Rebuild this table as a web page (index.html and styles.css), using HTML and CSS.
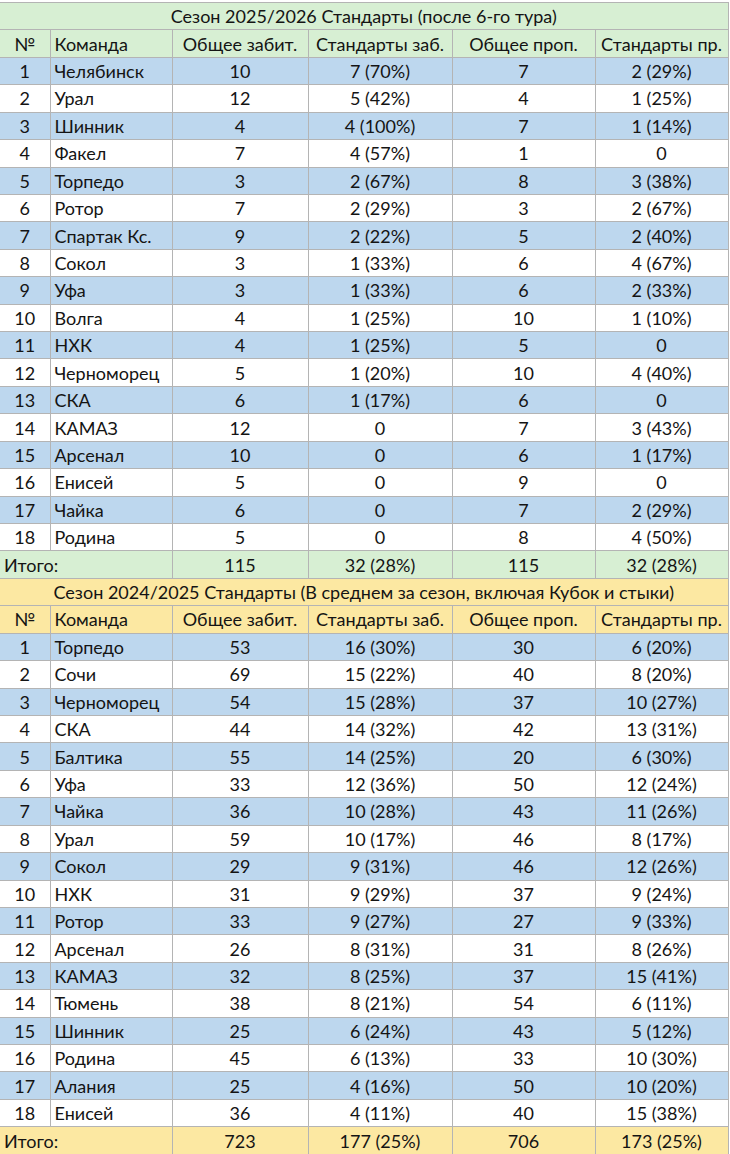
FILE: index.html
```html
<!DOCTYPE html>
<html lang="ru">
<head>
<meta charset="utf-8">
<link rel="stylesheet" href="styles.css">
</head>
<body>
<table class="sheet">
<colgroup>
<col class="c-num"><col class="c-team"><col class="c-a"><col class="c-b"><col class="c-c"><col class="c-d">
</colgroup>
<tbody class="green">
<tr class="title"><td colspan="6">Сезон 2025/2026 Стандарты (после 6-го тура)</td></tr>
<tr class="head"><td>№</td><td class="l">Команда</td><td>Общее забит.</td><td>Стандарты заб.</td><td>Общее проп.</td><td>Стандарты пр.</td></tr>
<tr class="odd"><td>1</td><td class="l">Челябинск</td><td>10</td><td>7 (70%)</td><td>7</td><td>2 (29%)</td></tr>
<tr><td>2</td><td class="l">Урал</td><td>12</td><td>5 (42%)</td><td>4</td><td>1 (25%)</td></tr>
<tr class="odd"><td>3</td><td class="l">Шинник</td><td>4</td><td>4 (100%)</td><td>7</td><td>1 (14%)</td></tr>
<tr><td>4</td><td class="l">Факел</td><td>7</td><td>4 (57%)</td><td>1</td><td>0</td></tr>
<tr class="odd"><td>5</td><td class="l">Торпедо</td><td>3</td><td>2 (67%)</td><td>8</td><td>3 (38%)</td></tr>
<tr><td>6</td><td class="l">Ротор</td><td>7</td><td>2 (29%)</td><td>3</td><td>2 (67%)</td></tr>
<tr class="odd"><td>7</td><td class="l">Спартак Кс.</td><td>9</td><td>2 (22%)</td><td>5</td><td>2 (40%)</td></tr>
<tr><td>8</td><td class="l">Сокол</td><td>3</td><td>1 (33%)</td><td>6</td><td>4 (67%)</td></tr>
<tr class="odd"><td>9</td><td class="l">Уфа</td><td>3</td><td>1 (33%)</td><td>6</td><td>2 (33%)</td></tr>
<tr><td>10</td><td class="l">Волга</td><td>4</td><td>1 (25%)</td><td>10</td><td>1 (10%)</td></tr>
<tr class="odd"><td>11</td><td class="l">НХК</td><td>4</td><td>1 (25%)</td><td>5</td><td>0</td></tr>
<tr><td>12</td><td class="l">Черноморец</td><td>5</td><td>1 (20%)</td><td>10</td><td>4 (40%)</td></tr>
<tr class="odd"><td>13</td><td class="l">СКА</td><td>6</td><td>1 (17%)</td><td>6</td><td>0</td></tr>
<tr><td>14</td><td class="l">КАМАЗ</td><td>12</td><td>0</td><td>7</td><td>3 (43%)</td></tr>
<tr class="odd"><td>15</td><td class="l">Арсенал</td><td>10</td><td>0</td><td>6</td><td>1 (17%)</td></tr>
<tr><td>16</td><td class="l">Енисей</td><td>5</td><td>0</td><td>9</td><td>0</td></tr>
<tr class="odd"><td>17</td><td class="l">Чайка</td><td>6</td><td>0</td><td>7</td><td>2 (29%)</td></tr>
<tr><td>18</td><td class="l">Родина</td><td>5</td><td>0</td><td>8</td><td>4 (50%)</td></tr>
<tr class="total"><td colspan="2" class="l">Итого:</td><td>115</td><td>32 (28%)</td><td>115</td><td>32 (28%)</td></tr>
</tbody>
<tbody class="yellow">
<tr class="title"><td colspan="6">Сезон 2024/2025 Стандарты (В среднем за сезон, включая Кубок и стыки)</td></tr>
<tr class="head"><td>№</td><td class="l">Команда</td><td>Общее забит.</td><td>Стандарты заб.</td><td>Общее проп.</td><td>Стандарты пр.</td></tr>
<tr class="odd"><td>1</td><td class="l">Торпедо</td><td>53</td><td>16 (30%)</td><td>30</td><td>6 (20%)</td></tr>
<tr><td>2</td><td class="l">Сочи</td><td>69</td><td>15 (22%)</td><td>40</td><td>8 (20%)</td></tr>
<tr class="odd"><td>3</td><td class="l">Черноморец</td><td>54</td><td>15 (28%)</td><td>37</td><td>10 (27%)</td></tr>
<tr><td>4</td><td class="l">СКА</td><td>44</td><td>14 (32%)</td><td>42</td><td>13 (31%)</td></tr>
<tr class="odd"><td>5</td><td class="l">Балтика</td><td>55</td><td>14 (25%)</td><td>20</td><td>6 (30%)</td></tr>
<tr><td>6</td><td class="l">Уфа</td><td>33</td><td>12 (36%)</td><td>50</td><td>12 (24%)</td></tr>
<tr class="odd"><td>7</td><td class="l">Чайка</td><td>36</td><td>10 (28%)</td><td>43</td><td>11 (26%)</td></tr>
<tr><td>8</td><td class="l">Урал</td><td>59</td><td>10 (17%)</td><td>46</td><td>8 (17%)</td></tr>
<tr class="odd"><td>9</td><td class="l">Сокол</td><td>29</td><td>9 (31%)</td><td>46</td><td>12 (26%)</td></tr>
<tr><td>10</td><td class="l">НХК</td><td>31</td><td>9 (29%)</td><td>37</td><td>9 (24%)</td></tr>
<tr class="odd"><td>11</td><td class="l">Ротор</td><td>33</td><td>9 (27%)</td><td>27</td><td>9 (33%)</td></tr>
<tr><td>12</td><td class="l">Арсенал</td><td>26</td><td>8 (31%)</td><td>31</td><td>8 (26%)</td></tr>
<tr class="odd"><td>13</td><td class="l">КАМАЗ</td><td>32</td><td>8 (25%)</td><td>37</td><td>15 (41%)</td></tr>
<tr><td>14</td><td class="l">Тюмень</td><td>38</td><td>8 (21%)</td><td>54</td><td>6 (11%)</td></tr>
<tr class="odd"><td>15</td><td class="l">Шинник</td><td>25</td><td>6 (24%)</td><td>43</td><td>5 (12%)</td></tr>
<tr><td>16</td><td class="l">Родина</td><td>45</td><td>6 (13%)</td><td>33</td><td>10 (30%)</td></tr>
<tr class="odd"><td>17</td><td class="l">Алания</td><td>25</td><td>4 (16%)</td><td>50</td><td>10 (20%)</td></tr>
<tr><td>18</td><td class="l">Енисей</td><td>36</td><td>4 (11%)</td><td>40</td><td>15 (38%)</td></tr>
<tr class="total"><td colspan="2" class="l">Итого:</td><td>723</td><td>177 (25%)</td><td>706</td><td>173 (25%)</td></tr>
</tbody>
</table>
</body>
</html>
```
FILE: styles.css
```css
html, body {
  margin: 0;
  padding: 0;
  background: #ffffff;
}
body {
  padding-top: 2px;
  font-family: Lato, "Open Sans", "Liberation Sans", sans-serif;
  font-size: 18px;
  color: #141414;
}
.sheet {
  border-collapse: collapse;
  table-layout: fixed;
  width: 728px;
}
.c-num { width: 50px; }
.c-team { width: 122px; }
.c-a { width: 136px; }
.c-b { width: 144px; }
.c-c { width: 143px; }
.c-d { width: 133px; }
.sheet td {
  height: 26.43px;
  padding: 0;
  border: 1px solid #b4b4b4;
  text-align: center;
  vertical-align: middle;
  white-space: nowrap;
  overflow: hidden;
  line-height: 20px;
}
.sheet tr > td:first-child { border-left: none; }
.sheet td.l {
  text-align: left;
  padding-left: 4px;
}
.sheet .odd td { background: #bdd7ee; }
.green .title td, .green .head td, .green .total td { background: #d7efd3; }
.yellow .title td, .yellow .head td, .yellow .total td { background: #fce8a2; }
.sheet .title td { padding: 0; text-align: center; }
```
